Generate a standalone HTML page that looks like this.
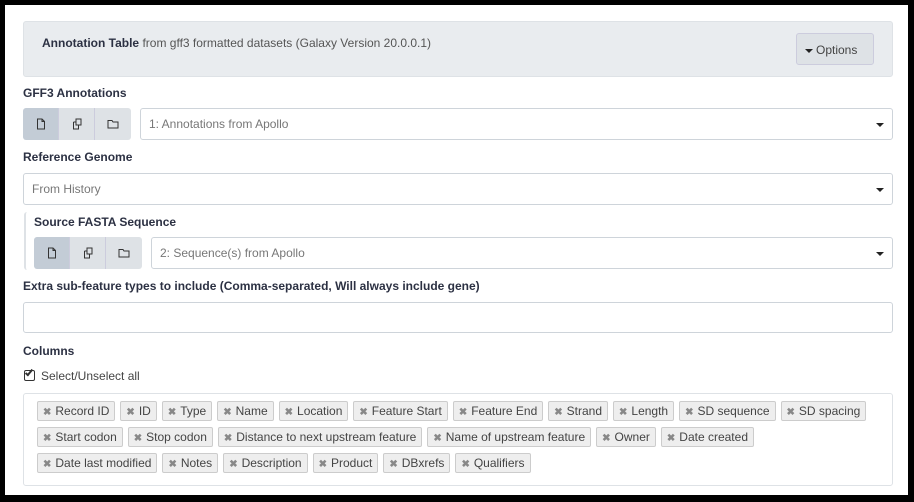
<!DOCTYPE html>
<html><head><meta charset="utf-8"><style>
*{box-sizing:border-box;margin:0;padding:0}
body{width:914px;height:502px;background:#000;font-family:"Liberation Sans",sans-serif;font-size:12px;color:#2c3143;position:relative;overflow:hidden}
.page{position:absolute;left:5px;top:5px;width:903px;height:490px;background:#fff}
.a{position:absolute}
.hdr{left:23px;top:21px;width:870px;height:56px;background:#e9ecef;border:1px solid #dee2e6;border-radius:3px}
.lbl{font-weight:bold;font-size:12px;color:#2c3143}
.sel{border:1px solid #ced4da;border-radius:3px;background:#fff;height:32px;color:#777;padding:8px 8px;font-size:12px}
.sel .car{position:absolute;right:8px;top:14px;width:0;height:0;border-left:4px solid transparent;border-right:4px solid transparent;border-top:4px solid #222}
.bg{display:flex;height:32px;border-radius:3px;overflow:hidden}
.bg div{width:36px;height:32px;background:#dee2e6;border-right:1px solid #ccd;display:flex;align-items:center;justify-content:center}
.bg div:first-child{background:#c3ccd6}
.bg div:last-child{border-right:none}
.tags{left:23px;top:393px;width:870px;height:93px;border:1px solid #dee2e6;border-radius:3px;padding:7px 0 0 13px}
.row{display:flex;gap:5px;margin-bottom:6px}
.t{height:20px;border:1px solid #ccc;background:#eee;border-radius:2px;padding:0 5px;font-size:12px;line-height:18px;color:#444;white-space:nowrap}
.t b{color:#888;font-weight:bold;font-size:10px;margin-right:4px}
</style></head><body>
<div class="page"></div>
<div class="a hdr"></div>
<div class="a" style="left:42px;top:36px;font-size:12px;color:#555"><b style="color:#2c3143">Annotation Table</b> from gff3 formatted datasets (Galaxy Version 20.0.0.1)</div>
<div class="a" style="left:796px;top:33px;width:78px;height:32px;background:#dee2e6;border:1px solid #ccd;border-radius:3px;font-size:12px;padding:9px 0 0 8px;color:#444"><span style="display:inline-block;border-left:4px solid transparent;border-right:4px solid transparent;border-top:4px solid #222;vertical-align:middle;margin-right:3px"></span>Options</div>

<div class="a lbl" style="left:23px;top:86px">GFF3 Annotations</div>
<div class="a bg" style="left:23px;top:108px;width:108px">
<div><svg width="12" height="12" viewBox="0 0 12 12" fill="none" stroke="#333"><path d="M2.5 1h4.5l2.5 2.5v7.5h-7z M7 1v2.5h2.5"/></svg></div>
<div><svg width="12" height="12" viewBox="0 0 12 12" fill="none" stroke="#333"><path d="M5 1h5v6h-5z M2.5 4h2.5 M2.5 4v7h5v-4"/></svg></div>
<div><svg width="12" height="12" viewBox="0 0 12 12" fill="none" stroke="#333"><path d="M1 2.5h4l1 1.5h5v6h-10z"/></svg></div></div>
<div class="a sel" style="left:140px;top:108px;width:753px">1: Annotations from Apollo<span class="car"></span></div>

<div class="a lbl" style="left:23px;top:150px">Reference Genome</div>
<div class="a sel" style="left:23px;top:173px;width:870px">From History<span class="car"></span></div>

<div class="a" style="left:24px;top:212px;width:4px;height:58px;border-left:2px solid #dee2e6;border-radius:3px 0 0 3px"></div>
<div class="a lbl" style="left:34px;top:215px">Source FASTA Sequence</div>
<div class="a bg" style="left:34px;top:237px;width:108px">
<div><svg width="12" height="12" viewBox="0 0 12 12" fill="none" stroke="#333"><path d="M2.5 1h4.5l2.5 2.5v7.5h-7z M7 1v2.5h2.5"/></svg></div>
<div><svg width="12" height="12" viewBox="0 0 12 12" fill="none" stroke="#333"><path d="M5 1h5v6h-5z M2.5 4h2.5 M2.5 4v7h5v-4"/></svg></div>
<div><svg width="12" height="12" viewBox="0 0 12 12" fill="none" stroke="#333"><path d="M1 2.5h4l1 1.5h5v6h-10z"/></svg></div></div>
<div class="a sel" style="left:151px;top:237px;width:742px">2: Sequence(s) from Apollo<span class="car"></span></div>

<div class="a lbl" style="left:23px;top:279px">Extra sub-feature types to include (Comma-separated, Will always include gene)</div>
<div class="a sel" style="left:23px;top:302px;width:870px;height:31px"></div>

<div class="a lbl" style="left:23px;top:344px">Columns</div>
<div class="a" style="left:24px;top:369px;font-size:12px;color:#444"><span style="display:inline-block;width:11px;height:11px;border:1.5px solid #333;border-radius:2px;vertical-align:-1px;margin-right:6px;position:relative"><span style="position:absolute;left:2px;top:-3px;width:4px;height:8px;border-right:2px solid #333;border-bottom:2px solid #333;transform:rotate(40deg)"></span></span>Select/Unselect all</div>

<div class="a tags">
<div class="row"><span class="t"><b>✖</b>Record ID</span><span class="t"><b>✖</b>ID</span><span class="t"><b>✖</b>Type</span><span class="t"><b>✖</b>Name</span><span class="t"><b>✖</b>Location</span><span class="t"><b>✖</b>Feature Start</span><span class="t"><b>✖</b>Feature End</span><span class="t"><b>✖</b>Strand</span><span class="t"><b>✖</b>Length</span><span class="t"><b>✖</b>SD sequence</span><span class="t"><b>✖</b>SD spacing</span></div>
<div class="row"><span class="t"><b>✖</b>Start codon</span><span class="t"><b>✖</b>Stop codon</span><span class="t"><b>✖</b>Distance to next upstream feature</span><span class="t"><b>✖</b>Name of upstream feature</span><span class="t"><b>✖</b>Owner</span><span class="t"><b>✖</b>Date created</span></div>
<div class="row"><span class="t"><b>✖</b>Date last modified</span><span class="t"><b>✖</b>Notes</span><span class="t"><b>✖</b>Description</span><span class="t"><b>✖</b>Product</span><span class="t"><b>✖</b>DBxrefs</span><span class="t"><b>✖</b>Qualifiers</span></div>
</div>
</body></html>
